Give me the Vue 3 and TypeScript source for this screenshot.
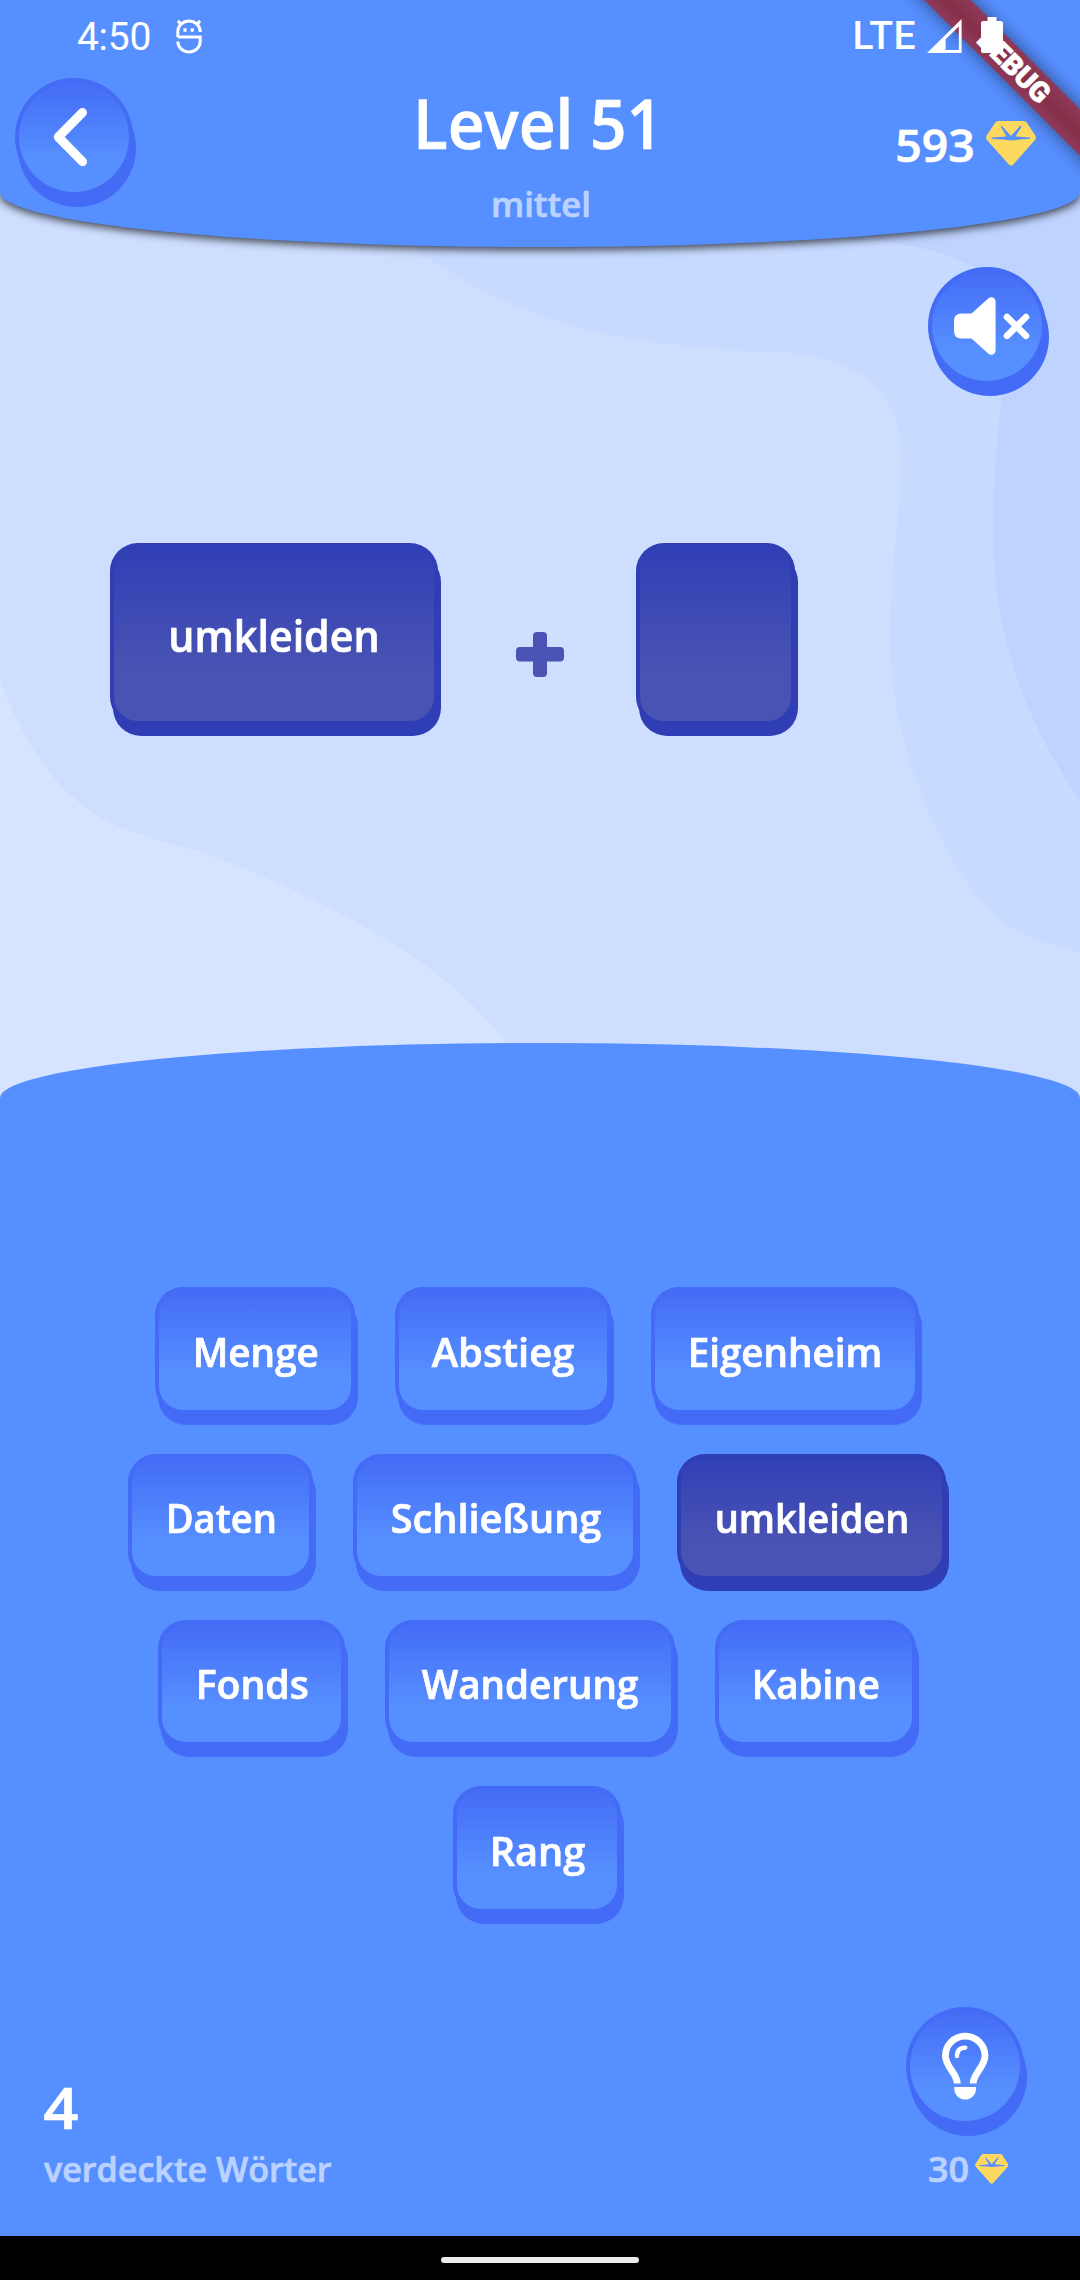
<script setup lang="ts">
import { h } from 'vue'

interface LabelProps {
  text: string
  w: number
  size: number
}

interface Word {
  text: string
  width: number
  ink: number
  used?: boolean
}

// Text line whose box is exactly its cap height and its set width.
const Label = (p: LabelProps) => {
  const cap = Math.round(p.size * 0.714 * 10) / 10
  return h('svg', { width: p.w, height: cap, style: { overflow: 'visible', display: 'block', flex: 'none' } }, [
    h(
      'text',
      {
        x: -p.size * 0.06,
        y: cap,
        'font-size': p.size,
        fill: 'currentColor',
        stroke: 'currentColor',
        'stroke-width': 0.7,
        textLength: p.w + p.size * 0.12,
        lengthAdjust: 'spacingAndGlyphs',
      },
      p.text,
    ),
  ])
}
Label.props = ['text', 'w', 'size']

const rows: Word[][] = [
  [
    { text: 'Menge', width: 200, ink: 121.5 },
    { text: 'Abstieg', width: 215.5, ink: 138 },
    { text: 'Eigenheim', width: 268.4, ink: 190 },
  ],
  [
    { text: 'Daten', width: 185, ink: 106.5 },
    { text: 'Schließung', width: 284, ink: 206 },
    { text: 'umkleiden', width: 268.4, ink: 190, used: true },
  ],
  [
    { text: 'Fonds', width: 186.5, ink: 108.5 },
    { text: 'Wanderung', width: 290, ink: 212 },
    { text: 'Kabine', width: 201, ink: 123.5 },
  ],
  [{ text: 'Rang', width: 168, ink: 91 }],
]

const gem =
  'M12.5 0H37.5Q39.5 0 40.7 1.6L49.3 14.6Q50.6 16.8 49 19L27.2 43.4Q25 45.6 22.8 43.4L1 19Q-.6 16.8 .7 14.6L9.3 1.6Q10.5 0 12.5 0Z' +
  'M5.5 17.2Q5.5 18 7 18Q18 18.4 25 19.6Q32 18.4 43 18Q44.5 18 44.5 17.2Q44.5 16.5 43 16.5Q37 16.2 29.5 15.5L35.6 5.4Q35 4.2 33.8 5.2L25 15L16.2 5.2Q15 4.2 14.8 5.4L20.5 15.5Q13 16.2 7 16.5Q5.5 16.5 5.5 17.2Z'
</script>

<template>
  <div class="screen">
    <svg class="waves" width="1080" height="1100" viewBox="0 0 1080 1100">
      <rect width="1080" height="1100" fill="#cedeff" />
      <path fill="#c7daff" d="M380 225C440 268 510 316 611 335C690 350 740 350 789 353C860 360 901 390 901 455C901 520 890 560 890 645C890 720 925 830 978 897C1012 940 1045 940 1080 952V180H380Z" />
      <path fill="#bfd3ff" d="M850 240C900 240 945 251 978 269C1005 290 1003 360 1001 404C996 450 993 490 993 530C993 640 1030 730 1080 800V180H850Z" />
      <path fill="#d6e4ff" d="M0 679C20 735 55 800 120 827C150 840 180 845 210 855C330 900 450 965 508 1045V1100H0Z" />
    </svg>

    <header class="top">
      <div class="status">
        <div class="status-side">
          <span class="clock">4:50</span>
          <svg width="26" height="35" viewBox="0 0 26 35" fill="none" stroke="#fff" stroke-width="3">
            <path d="M1.8 17.2V12.5A11.2 10.5 0 0 1 24.2 12.5M1.8 18H24.2V22.5A11.2 10.5 0 0 1 1.8 22.5M24.2 13V11M1.8 11V18" />
            <path d="M4.7 5.2L2 1.8M21.3 5.2L24 1.8" />
            <path stroke-width="3.4" d="M7.4 11H10.6M14.6 11H17.8" />
          </svg>
        </div>
        <div class="status-side">
          <span class="net">LTE</span>
          <svg class="signal" width="35" height="34" viewBox="0 0 35 34">
            <path fill="#fff" fill-rule="evenodd" d="M34.6 0V34H0ZM31.8 7.6L18.6 20.2V31H31.8Z" />
          </svg>
          <svg class="battery" width="22" height="36" viewBox="0 0 22 36">
            <path fill="#fff" d="M6.5 0H15.5V4H20Q22 4 22 6V34Q22 36 20 36H2Q0 36 0 34V6Q0 4 2 4H6.5Z" />
          </svg>
        </div>
      </div>
      <div class="bar">
        <button class="round">
          <svg width="118" height="118" viewBox="0 0 118 118">
            <path d="M67.5 34.5L43.3 59L67.5 83.7" fill="none" stroke="#fff" stroke-width="9" stroke-linecap="round" stroke-linejoin="round" />
          </svg>
        </button>
        <div class="titles">
          <Label text="Level 51" :w="242" :size="68" />
          <Label class="soft" text="mittel" :w="96" :size="33.5" />
        </div>
        <div class="balance">
          <Label text="593" :w="74" :size="45" />
          <svg class="gem" width="50" height="45" viewBox="0 0 50 45"><path :d="gem" fill="#fdd95f" fill-rule="evenodd" /></svg>
        </div>
      </div>
      <div class="debug-clip"><div class="debug">DEBUG</div></div>
    </header>

    <main class="play">
      <button class="round mute">
        <svg width="118" height="118" viewBox="0 0 118 118">
          <path fill="#fff" d="M33.5 46.5H43.5L60.5 31.2Q62.5 29.5 65 30.6Q67.6 31.8 67.6 34.5V83.5Q67.6 86.2 65 87.4Q62.5 88.5 60.5 86.8L43.5 71.5H33.5Q26 71.5 26 64V54Q26 46.5 33.5 46.5Z" />
          <path d="M79 50L98 68.8M98 50L79 68.8" stroke="#fff" stroke-width="6.6" stroke-linecap="round" />
        </svg>
      </button>
      <div class="equation">
        <div class="tile used big"><Label text="umkleiden" :w="206" :size="44" /></div>
        <svg class="plus" width="48" height="45" viewBox="0 0 48 45">
          <rect x="17" width="14" height="45" rx="4" />
          <rect y="15" width="48" height="14.4" rx="4" />
        </svg>
        <div class="tile used big empty"></div>
      </div>
    </main>

    <section class="panel">
      <div class="words">
        <div v-for="(row, i) in rows" :key="i" class="row">
          <button
            v-for="word in row"
            :key="word.text"
            class="tile"
            :class="{ used: word.used }"
            :style="{ width: word.width + 'px' }"
          >
            <Label :text="word.text" :w="word.ink" :size="38.8" />
          </button>
        </div>
      </div>
      <footer class="foot">
        <div class="remaining">
          <Label class="count" text="4" :w="28" :size="57" />
          <Label class="soft" text="verdeckte Wörter" :w="283.5" :size="34" />
        </div>
        <div class="hint">
          <button class="round">
            <svg width="118" height="118" viewBox="0 0 118 118">
              <path fill="none" stroke="#fff" stroke-width="6.8" d="M51.3 76.5C51 66 39.4 60 39.4 48.8A19.8 19.6 0 0 1 79 48.8C79 60 67.4 66 67.1 76.5" />
              <path fill="none" stroke="#fff" stroke-width="4.4" stroke-linecap="round" d="M51 49Q51 40.6 59.3 40.6" />
              <path fill="#fff" d="M48.3 80H70V82A10.85 10.6 0 0 1 48.3 82Z" />
            </svg>
          </button>
          <div class="cost">
            <Label class="soft" text="30" :w="37" :size="35" />
            <svg class="gem" width="33.5" height="30" viewBox="0 0 50 45"><path :d="gem" fill="#fdd95f" fill-rule="evenodd" /></svg>
          </div>
        </div>
      </footer>
    </section>

    <div class="nav"><div class="pill"></div></div>
  </div>
</template>

<style>
body {
  margin: 0;
  background: #000;
}
</style>

<style scoped>
.screen {
  position: relative;
  width: 1080px;
  height: 2280px;
  display: flex;
  flex-direction: column;
  overflow: hidden;
  color: #fff;
  background: #cedeff;
  font-family: 'Open Sans', 'Noto Sans', sans-serif;
  font-weight: 600;
}
.waves {
  position: absolute;
  left: 0;
  top: 0;
}
button {
  padding: 0;
  color: inherit;
  font: inherit;
}
.soft {
  color: #bbd2ff;
}
.top {
  position: relative;
  height: 247px;
  flex: none;
  box-sizing: border-box;
  background: #568fff;
  border-radius: 0 0 540px 540px / 0 0 55px 55px;
  box-shadow: 0 3px 8px rgba(0, 0, 0, 0.7);
}
.status {
  position: relative;
  z-index: 2;
  height: 72px;
  display: flex;
  justify-content: space-between;
  padding: 0 77px 0 77px;
  font-family: Roboto, sans-serif;
  font-size: 39px;
  font-weight: 400;
  line-height: 72px;
}
.status-side {
  display: flex;
  align-items: center;
}
.status-side > svg {
  flex: none;
}
.clock {
  width: 99px;
  padding-top: 1px;
  letter-spacing: -0.3px;
}
.net {
  margin-right: 11px;
  font-weight: 500;
  line-height: 68px;
  letter-spacing: 0.5px;
}
.signal {
  margin-right: 19px;
}
.battery {
  margin-top: -3px;
}
.bar {
  display: flex;
  padding: 6px 44px 0 15px;
  justify-content: space-between;
  height: 150px;
}
.titles {
  display: flex;
  flex-direction: column;
  align-items: center;
  gap: 44.5px;
  padding: 21.5px 0 0 45px;
}
.titles .soft {
  margin-left: 5px;
}
.balance {
  display: flex;
  gap: 14px;
  padding-top: 52px;
}
.balance .gem {
  margin-top: -9px;
}
.round {
  width: 118.4px;
  height: 118.4px;
  flex: none;
  box-sizing: border-box;
  border: 4px solid transparent;
  border-radius: 50%;
  background:
    linear-gradient(#446cf6, #568fff 70%) padding-box,
    linear-gradient(#436bf5, #436bf5) border-box;
  filter: drop-shadow(3px 11px 0 #436bf5);
}
.round svg {
  display: block;
  margin: -4px;
}
.debug-clip {
  position: absolute;
  right: 0;
  top: 0;
  width: 240px;
  height: 240px;
  overflow: hidden;
}
.debug {
  position: absolute;
  left: 34px;
  top: 49.5px;
  width: 280px;
  height: 33px;
  transform: rotate(45deg);
  background: linear-gradient(#8f3a5a, #862f48 50%, #8f3a5a);
  box-shadow: 0 0 17px rgba(0, 0, 0, 0.5);
  text-align: center;
  font-family: Roboto, sans-serif;
  font-weight: 900;
  font-size: 28px;
  line-height: 33px;
  -webkit-text-stroke: 0.8px #fff;
}
.play {
  position: relative;
  height: 795.5px;
  flex: none;
  display: flex;
  flex-direction: column;
}
.mute {
  align-self: flex-end;
  margin: 20px 33.6px 0 0;
}
.equation {
  display: flex;
  padding: 157.6px 0 0 109.5px;
}
.tile {
  height: 126.4px;
  flex: none;
  display: flex;
  justify-content: center;
  align-items: flex-start;
  box-sizing: border-box;
  padding: 47.5px 0 0 1px;
  border: 4px solid transparent;
  border-radius: 28px;
  background:
    linear-gradient(#446cf6, #568fff 70%) padding-box,
    linear-gradient(#436bf5, #436bf5) border-box;
  filter: drop-shadow(3px 11px 0 #436bf5);
}
.tile.used {
  background:
    linear-gradient(#313fb6, #4953b3 70%) padding-box,
    linear-gradient(#303eb5, #303eb5) border-box;
  filter: drop-shadow(3px 11px 0 #303eb5);
}
.tile.big {
  width: 328.5px;
  height: 181.7px;
  padding: 74.5px 0 0;
}
.tile.empty {
  width: 158.7px;
}
.plus {
  margin: 88.8px 72.4px 0 78px;
  fill: #4953b3;
}
.panel {
  position: relative;
  flex: 1;
  display: flex;
  flex-direction: column;
  justify-content: space-between;
  background: #568fff;
  border-radius: 540px 540px 0 0 / 55px 55px 0 0;
}
.words {
  display: flex;
  flex-direction: column;
  gap: 40px;
  padding: 244.7px 6px 0 0;
}
.row {
  display: flex;
  justify-content: center;
  gap: 40px;
}
.foot {
  display: flex;
  justify-content: space-between;
  padding: 0 56px 52px 46px;
}
.remaining {
  display: flex;
  flex-direction: column;
  justify-content: flex-end;
  gap: 30px;
  padding-bottom: 1.5px;
}
.count {
  margin-left: 1px;
}
.hint {
  width: 118.4px;
}
.cost {
  display: flex;
  gap: 8px;
  margin: 28px 0 0 24px;
  height: 30px;
  align-items: center;
}
.nav {
  height: 44px;
  flex: none;
  display: flex;
  justify-content: center;
  background: #000;
}
.pill {
  width: 198px;
  height: 6px;
  margin-top: 21px;
  border-radius: 3px;
  background: #ebebeb;
}
</style>
